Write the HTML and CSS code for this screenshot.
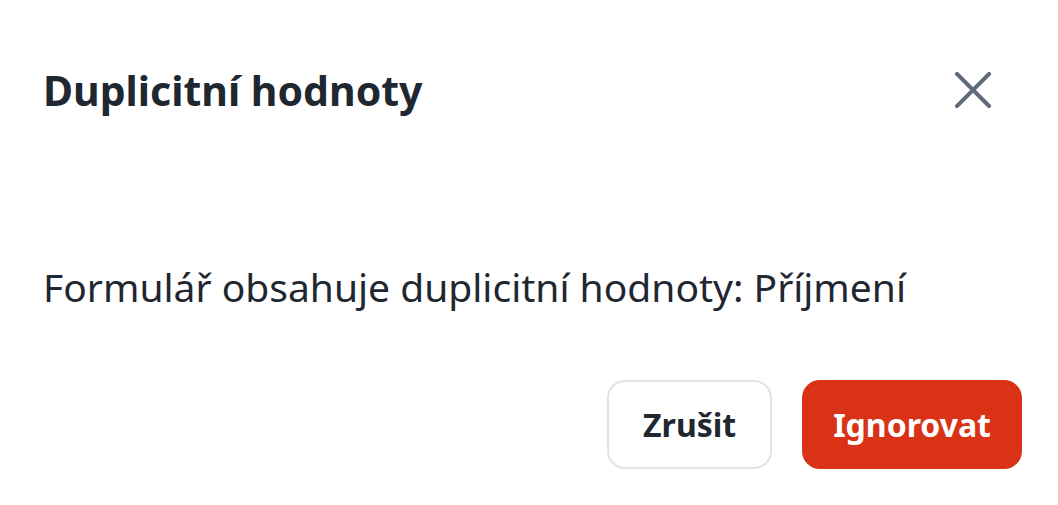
FILE: index.html
```html
<!DOCTYPE html>
<html lang="cs">
<head>
  <meta charset="UTF-8">
  <title>Duplicitní hodnoty</title>
  <link rel="stylesheet" href="styles.css">
</head>
<body>
<div class="dialog">
  <div class="dialog-header">
    <h2 class="dialog-title">Duplicitní hodnoty</h2>
    <button class="close" aria-label="Zavřít">
      <svg width="36" height="36" viewBox="0 0 36 36">
        <path d="M2 2 L34 34 M34 2 L2 34" stroke="#5f6b7a" stroke-width="4" stroke-linecap="square" fill="none"/>
      </svg>
    </button>
  </div>

  <p class="dialog-body">Formulář obsahuje duplicitní hodnoty: Příjmení</p>

  <div class="dialog-footer">
    <button class="button button-secondary">Zrušit</button>
    <button class="button button-danger">Ignorovat</button>
  </div>
</div>
</body>
</html>
```

FILE: styles.css
```css
/* Dialog */
body {
  font-family: "Noto Sans", Roboto, sans-serif;
  background: #fff;
  color: #1f2731;
  margin: 0;
}
.dialog {
  padding: 60px 36px 35px 43px;
}
.dialog-header {
  display: flex;
  justify-content: space-between;
  align-items: center;
  height: 60px;
}
.dialog-title {
  margin: 0;
  font-size: 41px;
  font-weight: 700;
}
.close {
  background: none;
  border: none;
  padding: 0;
  margin-right: 31px;
  cursor: pointer;
  display: flex;
}
.dialog-body {
  margin: 0;
  padding-top: 142px;
  font-size: 39px;
  line-height: 50px;
}
.dialog-footer {
  display: flex;
  justify-content: flex-end;
  gap: 30px;
  margin-top: 68px;
}
.button {
  font-family: inherit;
  font-size: 32px;
  font-weight: 700;
  height: 89px;
  padding: 0 29px;
  border-radius: 18px;
  cursor: pointer;
}
.button-secondary {
  min-width: 165px;
  background: #fff;
  color: #1f2731;
  border: 2px solid #e0e3e8;
}
.button-danger {
  background: #d93217;
  color: #fff;
  border: 2px solid #d93217;
}
```
